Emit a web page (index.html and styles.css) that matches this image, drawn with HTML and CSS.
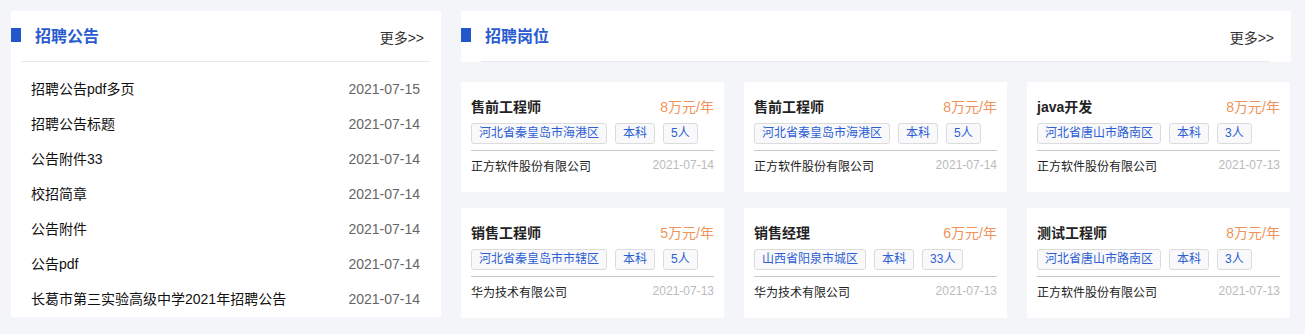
FILE: index.html
```html
<!DOCTYPE html>
<html lang="zh-CN">
<head>
  <meta charset="UTF-8" />
  <meta name="viewport" content="width=device-width, initial-scale=1.0" />
  <title>招聘</title>
  <link rel="stylesheet" href="styles.css">
</head>
<body>
  <div class="wrap">
    <div class="notice">
      <div class="head">
        <span class="title">招聘公告</span>
        <a class="more" href="#">更多&gt;&gt;</a>
      </div>
      <ul class="list">
        <li><span>招聘公告pdf多页</span><span class="date">2021-07-15</span></li>
        <li><span>招聘公告标题</span><span class="date">2021-07-14</span></li>
        <li><span>公告附件33</span><span class="date">2021-07-14</span></li>
        <li><span>校招简章</span><span class="date">2021-07-14</span></li>
        <li><span>公告附件</span><span class="date">2021-07-14</span></li>
        <li><span>公告pdf</span><span class="date">2021-07-14</span></li>
        <li><span>长葛市第三实验高级中学2021年招聘公告</span><span class="date">2021-07-14</span></li>
      </ul>
    </div>

    <div class="jobs">
      <div class="head">
        <span class="title">招聘岗位</span>
        <a class="more" href="#">更多&gt;&gt;</a>
      </div>
      <div class="grid">
        <div class="card">
          <div class="row"><span class="name">售前工程师</span><span class="pay">8万元/年</span></div>
          <div class="tags"><span>河北省秦皇岛市海港区</span><span>本科</span><span>5人</span></div>
          <div class="row foot"><span>正方软件股份有限公司</span><span class="day">2021-07-14</span></div>
        </div>
        <div class="card">
          <div class="row"><span class="name">售前工程师</span><span class="pay">8万元/年</span></div>
          <div class="tags"><span>河北省秦皇岛市海港区</span><span>本科</span><span>5人</span></div>
          <div class="row foot"><span>正方软件股份有限公司</span><span class="day">2021-07-14</span></div>
        </div>
        <div class="card">
          <div class="row"><span class="name">java开发</span><span class="pay">8万元/年</span></div>
          <div class="tags"><span>河北省唐山市路南区</span><span>本科</span><span>3人</span></div>
          <div class="row foot"><span>正方软件股份有限公司</span><span class="day">2021-07-13</span></div>
        </div>
        <div class="card">
          <div class="row"><span class="name">销售工程师</span><span class="pay">5万元/年</span></div>
          <div class="tags"><span>河北省秦皇岛市市辖区</span><span>本科</span><span>5人</span></div>
          <div class="row foot"><span>华为技术有限公司</span><span class="day">2021-07-13</span></div>
        </div>
        <div class="card">
          <div class="row"><span class="name">销售经理</span><span class="pay">6万元/年</span></div>
          <div class="tags"><span>山西省阳泉市城区</span><span>本科</span><span>33人</span></div>
          <div class="row foot"><span>华为技术有限公司</span><span class="day">2021-07-13</span></div>
        </div>
        <div class="card">
          <div class="row"><span class="name">测试工程师</span><span class="pay">8万元/年</span></div>
          <div class="tags"><span>河北省唐山市路南区</span><span>本科</span><span>3人</span></div>
          <div class="row foot"><span>正方软件股份有限公司</span><span class="day">2021-07-13</span></div>
        </div>
      </div>
    </div>
  </div>
</body>
</html>
```

FILE: styles.css
```css
body { margin: 0; background: #f4f5f9; font-family: "Liberation Sans", "Noto Sans CJK SC", sans-serif; color: #333; }
.wrap { display: flex; gap: 20px; padding: 11px 0 0 11px; align-items: flex-start; }

/* section header: blue marker, title, more link, thin rule underneath */
.head { display: flex; justify-content: space-between; align-items: center; height: 51px; position: relative; background: #fff; }
.head::before { content: ""; position: absolute; left: 0; top: 17px; width: 10px; height: 14px; background: #2157c8; }
.head::after { content: ""; position: absolute; bottom: 0; height: 1px; background: #e7e8ef; }
.title { font-size: 16px; font-weight: bold; color: #2a5bd0; padding-left: 24px; line-height: 50px; }
.more { font-size: 14px; color: #333; text-decoration: none; margin-right: 17px; }

.notice { width: 430px; height: 306px; background: #fff; }
.notice .head::after { left: 10px; right: 11px; }

.list { list-style: none; margin: 0; padding: 10px 21px 0 20px; }
.list li { display: flex; justify-content: space-between; height: 35px; line-height: 35px; font-size: 14px; color: #111; }
.list .date { color: #666; }

.jobs { width: 830px; }
.jobs .head::after { left: 20px; right: 21px; }

.grid { display: grid; grid-template-columns: repeat(3, 263px); column-gap: 20px; row-gap: 16px; margin-top: 20px; }
.card { background: #fff; height: 110px; box-sizing: border-box; padding: 15px 10px 0; }
.row { display: flex; justify-content: space-between; line-height: 20px; }
.name { font-size: 14px; font-weight: bold; color: #222; }
.pay { font-size: 14px; color: #f0935a; }
.tags { display: flex; gap: 8px; margin-top: 6px; padding-bottom: 6px; border-bottom: 1px solid #c8c8c8; }
.tags span { font-size: 12px; line-height: 19px; padding: 0 7px; border: 1px solid #dcdcdc; border-radius: 3px; background: #f9f9fb; color: #2d5fd3; }
.foot { margin-top: 6px; font-size: 12px; color: #222; }
.foot .day { color: #bbb; line-height: 17px; }
```
